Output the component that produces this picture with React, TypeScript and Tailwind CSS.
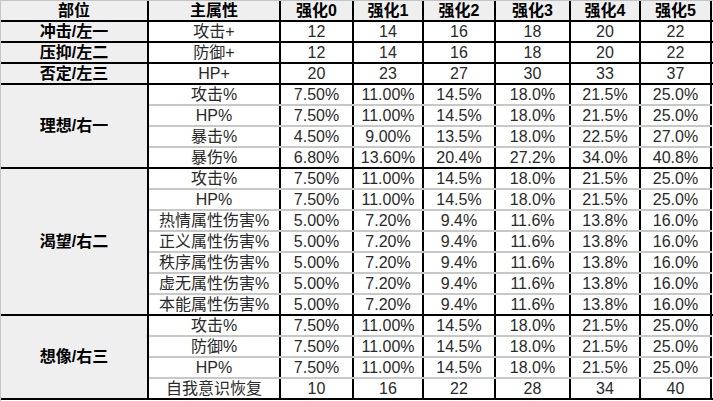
const cols = ["w-[132px]", "w-[73px]", "w-[70px]", "w-[72px]", "w-[75px]", "w-[70px]", "w-[71px]"];

type Row = [string, ...string[]];

const groups: { label: string; rows: Row[] }[] = [
  { label: "冲击/左一", rows: [["攻击+", "12", "14", "16", "18", "20", "22"]] },
  { label: "压抑/左二", rows: [["防御+", "12", "14", "16", "18", "20", "22"]] },
  { label: "否定/左三", rows: [["HP+", "20", "23", "27", "30", "33", "37"]] },
  {
    label: "理想/右一",
    rows: [
      ["攻击%", "7.50%", "11.00%", "14.5%", "18.0%", "21.5%", "25.0%"],
      ["HP%", "7.50%", "11.00%", "14.5%", "18.0%", "21.5%", "25.0%"],
      ["暴击%", "4.50%", "9.00%", "13.5%", "18.0%", "22.5%", "27.0%"],
      ["暴伤%", "6.80%", "13.60%", "20.4%", "27.2%", "34.0%", "40.8%"],
    ],
  },
  {
    label: "渴望/右二",
    rows: [
      ["攻击%", "7.50%", "11.00%", "14.5%", "18.0%", "21.5%", "25.0%"],
      ["HP%", "7.50%", "11.00%", "14.5%", "18.0%", "21.5%", "25.0%"],
      ["热情属性伤害%", "5.00%", "7.20%", "9.4%", "11.6%", "13.8%", "16.0%"],
      ["正义属性伤害%", "5.00%", "7.20%", "9.4%", "11.6%", "13.8%", "16.0%"],
      ["秩序属性伤害%", "5.00%", "7.20%", "9.4%", "11.6%", "13.8%", "16.0%"],
      ["虚无属性伤害%", "5.00%", "7.20%", "9.4%", "11.6%", "13.8%", "16.0%"],
      ["本能属性伤害%", "5.00%", "7.20%", "9.4%", "11.6%", "13.8%", "16.0%"],
    ],
  },
  {
    label: "想像/右三",
    rows: [
      ["攻击%", "7.50%", "11.00%", "14.5%", "18.0%", "21.5%", "25.0%"],
      ["防御%", "7.50%", "11.00%", "14.5%", "18.0%", "21.5%", "25.0%"],
      ["HP%", "7.50%", "11.00%", "14.5%", "18.0%", "21.5%", "25.0%"],
      ["自我意识恢复", "10", "16", "22", "28", "34", "40"],
    ],
  },
];

const header = ["主属性", "强化0", "强化1", "强化2", "强化3", "强化4", "强化5"];

export default function App() {
  return (
    <div
      className="w-[713px] h-[401px] overflow-hidden bg-white border-l border-t border-[#c4c4c4] text-[16px] leading-none text-[#2a2a2a]"
      style={{ fontFamily: '"Liberation Sans", Arial, "Noto Sans CJK SC", sans-serif' }}
    >
      {/* header */}
      <div className="flex h-[21px] bg-[#efefef] border-b-2 border-black font-bold text-black">
        <div className="w-[148px] shrink-0 border-r-2 border-black flex items-center justify-center">部位</div>
        {header.map((h, i) => (
          <div key={h} className={`${cols[i]} shrink-0 border-r-2 border-black flex items-center justify-center`}>
            {h}
          </div>
        ))}
      </div>

      {groups.map((g) => (
        <div key={g.label} className="flex border-b-2 border-black">
          <div className="w-[148px] shrink-0 bg-[#efefef] border-r-2 border-black flex items-center justify-center font-bold text-black">
            {g.label}
          </div>
          <div className="flex flex-col">
            {g.rows.map((r, ri) => {
              const last = ri === g.rows.length - 1;
              return (
                <div
                  key={ri}
                  className={last ? "flex h-[19px]" : "flex h-[21px] border-b-2 border-[#c8c8c8]"}
                >
                  {r.map((c, ci) => (
                    <div
                      key={ci}
                      className={`${cols[ci]} shrink-0 border-r-2 border-black flex items-center justify-center`}
                    >
                      {c}
                    </div>
                  ))}
                </div>
              );
            })}
          </div>
        </div>
      ))}
    </div>
  );
}
